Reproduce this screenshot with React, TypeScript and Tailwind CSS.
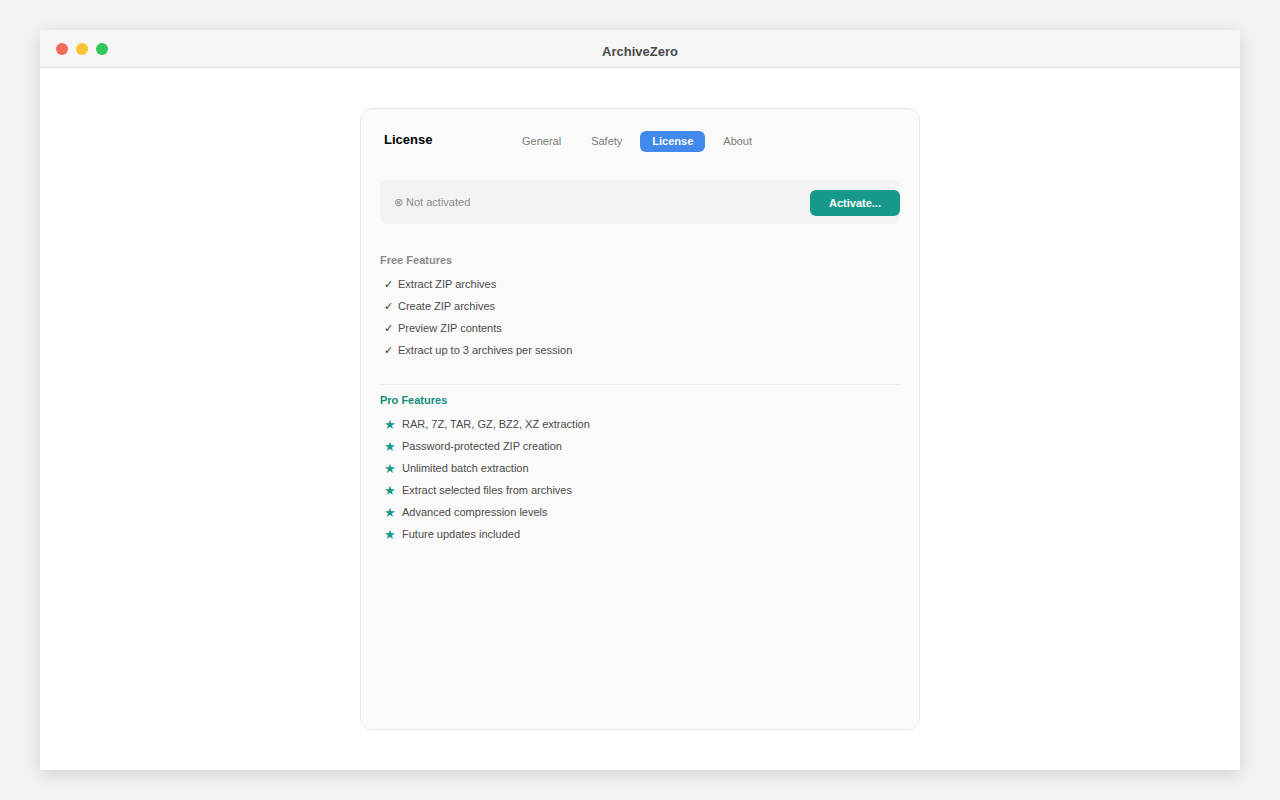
const freeFeatures = [
  'Extract ZIP archives',
  'Create ZIP archives',
  'Preview ZIP contents',
  'Extract up to 3 archives per session',
];

const proFeatures = [
  'RAR, 7Z, TAR, GZ, BZ2, XZ extraction',
  'Password-protected ZIP creation',
  'Unlimited batch extraction',
  'Extract selected files from archives',
  'Advanced compression levels',
  'Future updates included',
];

const tabs = ['General', 'Safety', 'License', 'About'];

export default function App() {
  return (
    <div className="min-h-screen bg-[#f3f3f7] pt-[30px] px-10 font-['Liberation_Sans',Arial,sans-serif]">
      <div className="h-[740px] bg-white shadow-[0_4px_16px_rgba(0,0,0,0.14)] flex flex-col">
        {/* Title bar */}
        <div className="relative h-[38px] bg-[#f6f6f6] border-b border-[#e3e3e3] flex items-center justify-center shrink-0">
          <div className="absolute left-[16px] top-[13px] flex gap-2">
            <span className="w-3 h-3 rounded-full bg-[#f46b5b]" />
            <span className="w-3 h-3 rounded-full bg-[#fbc531]" />
            <span className="w-3 h-3 rounded-full bg-[#2fc95a]" />
          </div>
          <span className="pt-[7px] text-[13px] font-bold text-[#4a4a4a]">ArchiveZero</span>
        </div>

        {/* Content */}
        <div className="flex-1 flex justify-center pt-[40px] pb-[40px]">
          <div className="w-[560px] h-[622px] rounded-xl border border-[#e6e6e6] bg-[#fafafa] px-[19px]">
            {/* Header */}
            <div className="flex items-center pt-[22px]">
              <div className="w-[130px] pl-1 pb-[4px] leading-[17px] text-[13px] font-bold text-black">License</div>
              <div className="flex gap-[6px]">
                {tabs.map((t) => (
                  <div
                    key={t}
                    className={`h-[21px] px-3 flex items-center rounded-md text-[11px] ${
                      t === 'License' ? 'bg-[#4189ec] text-white font-bold' : 'text-[#7a7a7a]'
                    }`}
                  >
                    {t}
                  </div>
                ))}
              </div>
            </div>

            {/* Status */}
            <div className="mt-[28px] h-[44px] rounded-lg bg-[#f3f3f3] flex items-center justify-between pl-[14px] pr-0">
              <span className="text-[11px] text-[#8a8a8a]">⊗ Not activated</span>
              <button className="mt-[2px] w-[90px] h-[26px] rounded-md bg-[#16998a] text-white text-[11px] font-bold">
                Activate...
              </button>
            </div>

            {/* Free features */}
            <div className="mt-[28px] text-[11px] font-bold text-[#8a8a8a]">Free Features</div>
            <ul className="mt-[5px]">
              {freeFeatures.map((f) => (
                <li key={f} className="h-[22px] flex items-center pl-1 text-[11px] text-[#4a4a4a]">
                  <span className="w-[14px] text-[#333]">✓</span>
                  <span>{f}</span>
                </li>
              ))}
            </ul>

            <div className="mt-[22px] border-t border-[#ececec]" />

            {/* Pro features */}
            <div className="mt-[7px] text-[11px] font-bold text-[#138c7d]">Pro Features</div>
            <ul className="mt-[5px]">
              {proFeatures.map((f) => (
                <li key={f} className="h-[22px] flex items-center pl-1 text-[11px] text-[#4a4a4a]">
                  <span className="w-[18px] text-[#16998a] text-[13px] leading-none">★</span>
                  <span>{f}</span>
                </li>
              ))}
            </ul>
          </div>
        </div>
      </div>
    </div>
  );
}
